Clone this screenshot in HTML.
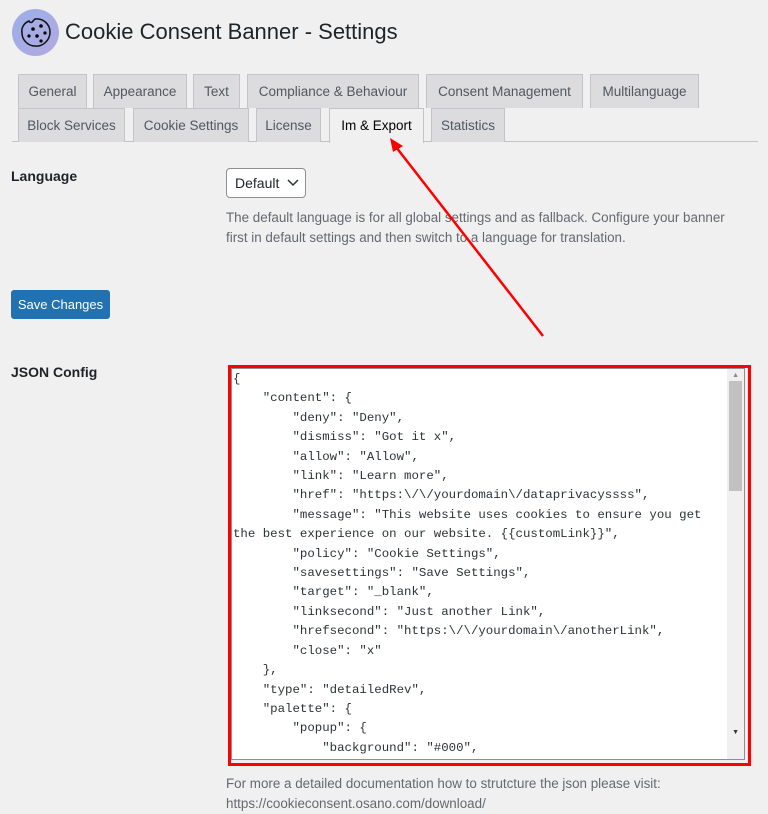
<!DOCTYPE html>
<html><head><meta charset="utf-8"><style>
*{box-sizing:border-box}
body{margin:0;width:768px;height:805px;overflow:hidden;background:#f0f0f1;font-family:"Liberation Sans",sans-serif;color:#1d2327;position:relative}
.abs{position:absolute}
.tab{position:absolute;height:34px;background:#dcdcde;border:1px solid #c3c4c7;border-bottom:none;font-size:13.5px;color:#50575e;line-height:33px;text-align:center;white-space:nowrap}
.tab.act{background:#f0f0f1;color:#000;height:35px}
.mono{font-family:"Liberation Mono",monospace;font-size:12.4px;line-height:19.4px;white-space:pre;color:#2c3338}
</style></head><body>
<div class="abs" style="left:12px;top:9px;width:47px;height:47px;border-radius:50%;background:linear-gradient(135deg,#9ab0e8,#b3a8e0)"></div>
<svg class="abs" style="left:12px;top:9px" width="47" height="47" viewBox="0 0 47 47"><path d="M23 10 C31 9 38 15 38 23 C38 31 31 38 23 37 C16 37 10 31 10 24 C9 19 12 14 17 12 C18 14 20 14 21 12 Z" fill="none" stroke="#111" stroke-width="1.5"/><circle cx="21" cy="20" r="1.8"/><circle cx="29" cy="17" r="1.8"/><circle cx="33" cy="24" r="1.6"/><circle cx="25" cy="27" r="1.8"/><circle cx="17" cy="27" r="1.6"/><circle cx="29" cy="32" r="1.6"/></svg>
<div class="abs" style="left:65px;top:19px;font-size:22px;color:#1d2327">Cookie Consent Banner - Settings</div>

<div class="tab" style="left:18px;top:74px;width:69px">General</div>
<div class="tab" style="left:93px;top:74px;width:94px">Appearance</div>
<div class="tab" style="left:193px;top:74px;width:47px">Text</div>
<div class="tab" style="left:247px;top:74px;width:172px">Compliance &amp; Behaviour</div>
<div class="tab" style="left:426px;top:74px;width:157px">Consent Management</div>
<div class="tab" style="left:590px;top:74px;width:109px">Multilanguage</div>
<div class="abs" style="left:12px;top:141px;width:746px;height:1px;background:#c3c4c7"></div>
<div class="tab" style="left:18px;top:108px;width:107px">Block Services</div>
<div class="tab" style="left:133px;top:108px;width:116px">Cookie Settings</div>
<div class="tab" style="left:256px;top:108px;width:65px">License</div>
<div class="tab act" style="left:329px;top:108px;width:95px">Im &amp; Export</div>
<div class="tab" style="left:431px;top:108px;width:74px">Statistics</div>

<div class="abs" style="left:11px;top:168px;font-size:14px;font-weight:bold">Language</div>
<div class="abs" style="left:226px;top:168px;width:80px;height:30px;background:#fff;border:1px solid #8c8f94;border-radius:4px;font-size:14px;line-height:28px;padding-left:8px">Default</div>
<svg class="abs" style="left:287px;top:179px" width="12" height="8"><path d="M1 1 L6 6 L11 1" fill="none" stroke="#2c3338" stroke-width="1.5"/></svg>
<div class="abs" style="left:226px;top:208px;width:540px;font-size:13.4px;line-height:20px;color:#646970">The default language is for all global settings and as fallback. Configure your banner<br>first in default settings and then switch to a language for translation.</div>
<div class="abs" style="left:11px;top:290px;width:99px;height:29px;background:#2271b1;border:1px solid #2271b1;border-radius:3px;color:#fff;font-size:13px;line-height:27px;text-align:center">Save Changes</div>

<div class="abs" style="left:11px;top:364px;font-size:14px;font-weight:bold">JSON Config</div>
<div class="abs" style="left:228px;top:365px;width:523px;height:401px;border:3px solid #f00"></div>
<div class="abs" style="left:231px;top:368px;width:514px;height:392px;background:#fff;border:1px solid #8c8f94;overflow:hidden">
<div class="mono" style="position:absolute;left:1px;top:1px">{
    "content": {
        "deny": "Deny",
        "dismiss": "Got it x",
        "allow": "Allow",
        "link": "Learn more",
        "href": "https:\/\/yourdomain\/dataprivacyssss",
        "message": "This website uses cookies to ensure you get
the best experience on our website. {{customLink}}",
        "policy": "Cookie Settings",
        "savesettings": "Save Settings",
        "target": "_blank",
        "linksecond": "Just another Link",
        "hrefsecond": "https:\/\/yourdomain\/anotherLink",
        "close": "x"
    },
    "type": "detailedRev",
    "palette": {
        "popup": {
            "background": "#000",</div>
<div class="abs" style="right:0;top:0;width:17px;height:390px;background:#f0f0f0"></div>
<div class="abs" style="right:2px;top:12px;width:13px;height:110px;background:#c1c1c1"></div>
<div class="abs" style="right:5px;top:3px;font-size:7px;color:#888">&#9650;</div>
<div class="abs" style="right:5px;top:360px;font-size:7px;color:#333">&#9660;</div>
</div>
<div class="abs" style="left:226px;top:774px;width:540px;font-size:13.4px;line-height:20px;color:#646970">For more a detailed documentation how to strutcture the json please visit:<br>https://cookieconsent.osano.com/download/</div>

<svg class="abs" style="left:0;top:0" width="768" height="805"><line x1="543" y1="336" x2="396" y2="147" stroke="#f00" stroke-width="2.5"/><path d="M390 138 L403 146 L393 152 Z" fill="#f00"/></svg>
</body></html>
